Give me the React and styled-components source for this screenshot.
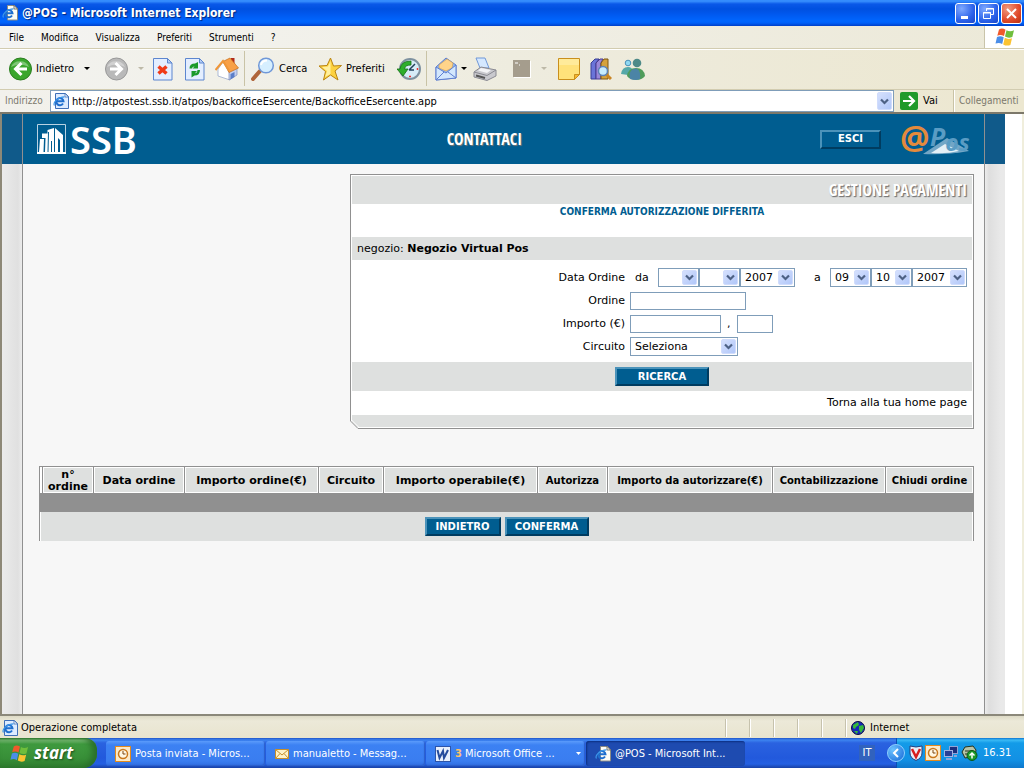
import React from "react";
import styled, { createGlobalStyle, css } from "styled-components";

const BLUE = "#005d90";
const GREY = "#dee0df";
const LINE = "#909090";
const UI_FONT = `"DejaVu Sans Condensed", "DejaVu Sans", sans-serif`;
const PAGE_FONT = `"DejaVu Sans", sans-serif`;
const DISPLAY_FONT = `"Open Sans Condensed", "Roboto Condensed", "Liberation Sans Narrow", "DejaVu Sans Condensed", sans-serif`;

const GlobalStyle = createGlobalStyle`
  * { box-sizing: border-box; }
  body { margin: 0; background: #f7f7f7; font: 11px/14px ${UI_FONT}; color: #000; }
  button, input, select { font: inherit; color: inherit; margin: 0; }
  svg { display: block; flex: none; }
`;

const Screen = styled.div`
  display: flex;
  flex-direction: column;
  min-height: 100vh;
`;

/* ---------- window chrome ---------- */
const TitleBar = styled.header`
  display: flex;
  align-items: center;
  gap: 4px;
  height: 26px;
  padding: 0 2px;
  background: linear-gradient(#2f86fb 0, #3a92ff 1px, #0a58e8 4px, #0050e0 9px, #0058ee 14px, #0066ff 21px, #0060f8 23px, #003fc8 26px);
`;
const WindowTitle = styled.h1`
  flex: 1;
  margin: 0;
  font: bold 12px/16px ${UI_FONT};
  color: #fff;
  text-shadow: 1px 1px 1px #00257a;
`;
const WindowButtons = styled.div`
  display: flex;
  gap: 2px;
`;
const WindowButton = styled.button`
  width: 21px;
  height: 21px;
  padding: 0;
  display: grid;
  place-items: center;
  border: 1px solid #fff;
  border-radius: 3px;
  background: ${(p) =>
    p.$close
      ? "radial-gradient(circle at 30% 25%, #f09a80, #e0492a 60%, #b9300f)"
      : "radial-gradient(circle at 30% 25%, #7fa9ff, #2c62ea 60%, #1a46c8)"};
`;

const MenuBar = styled.nav`
  display: flex;
  height: 23px;
  background: linear-gradient(90deg, #f4f4f2, #ece9d8);
  border-bottom: 1px solid #d2ccb0;
`;
const MenuItems = styled.div`
  flex: 1;
  display: flex;
  align-items: center;
  gap: 1px;
  padding-left: 1px;
`;
const MenuItem = styled.button`
  border: 0;
  background: none;
  padding: 1px 8px 0;
  font-size: 10px;
`;
const Throbber = styled.div`
  width: 40px;
  display: grid;
  place-items: center;
  background: #fff;
  border-left: 1px solid #c9c4aa;
`;

const Toolbar = styled.div`
  display: flex;
  align-items: center;
  height: 41px;
  padding: 0 0 2px 8px;
  background: linear-gradient(90deg, #f3f3f0, #eeecdf 50%, #ece7d0);
  border-top: 1px solid #fff;
  border-bottom: 1px solid #d2ccb0;
`;
const Tool = styled.button`
  display: flex;
  align-items: center;
  justify-content: ${(p) => (p.$wide ? "flex-start" : "center")};
  gap: 4px;
  width: ${(p) => p.$wide || 32}px;
  height: 34px;
  padding: 0 0 0 ${(p) => p.$pad || 0}px;
  border: 0;
  background: none;
  white-space: nowrap;
`;
const ToolArrow = styled.span`
  margin-left: ${(p) => (p.$tight ? 0 : 6)}px;
  border: 3px solid transparent;
  border-top-color: ${(p) => (p.$off ? "#bdb9a8" : "#000")};
  border-bottom: 0;
`;
const Divider = styled.span`
  width: 1px;
  height: 35px;
  margin: 0 ${(p) => p.$after}px 0 1px;
  background: #c9c3a6;
`;

const AddressBar = styled.form`
  display: flex;
  align-items: stretch;
  height: 24px;
  background: linear-gradient(90deg, #f2f1ec, #ece7d0);
  border-bottom: 2px solid #7c786a;
`;
const AddressLabel = styled.label`
  width: 50px;
  padding-left: 5px;
  line-height: 22px;
  font-size: 10px;
  color: #7b786c;
`;
const AddressBox = styled.div`
  flex: 1;
  display: flex;
  align-items: center;
  gap: 3px;
  padding: 1px 1px 1px 2px;
  background: #fff;
  border: 1px solid #7f9db9;
`;
const AddressInput = styled.input`
  flex: 1;
  min-width: 0;
  border: 0;
  padding: 2px 0 0;
  background: none;
  outline: none;
`;
const arrowFace = css`
  display: grid;
  place-items: center;
  padding: 0;
  border: 1px solid #d0dcfc;
  border-radius: 2px;
  background: linear-gradient(135deg, #d5e0fd, #b1c7f9);
`;
const DropButton = styled.button`
  ${arrowFace}
  width: 15px;
  height: 18px;
`;
const GoButton = styled.button`
  display: flex;
  align-items: center;
  gap: 5px;
  width: 60px;
  padding: 0 0 0 6px;
  border: 0;
  border-right: 1px solid #c9c3a6;
  background: none;
`;
const LinksLabel = styled.span`
  width: 70px;
  padding-left: 4px;
  border-left: 1px solid #fff;
  font-size: 10px;
  line-height: 22px;
  color: #7b786c;
`;

/* ---------- web page ---------- */
const Viewport = styled.main`
  flex: 1;
  display: flex;
  padding-right: 17px;
  background: #fff;
  border-left: 2px solid #8d8877;
  border-right: 2px solid #f0eedc;
  font-family: ${PAGE_FONT};
`;
const Gutter = styled.div`
  width: 21px;
  background: linear-gradient(90deg, #ebebeb, #e0e0e0 80%, #ececec);
  ${(p) =>
    p.$right &&
    css`
      background: linear-gradient(90deg, #ececec, #dedede 20%, #e9e9e9 80%);
    `}
  border-${(p) => (p.$right ? "left" : "right")}: 1px solid ${LINE};
  &::before {
    content: "";
    display: block;
    height: 50px;
    background: #105a8a;
  }
`;
const Content = styled.div`
  flex: 1;
  min-width: 0;
  background: #f7f7f7;
`;
const Banner = styled.div`
  display: flex;
  align-items: center;
  height: 50px;
  padding: 0 13px 0 14px;
  background: ${BLUE};
`;
const BrandLink = styled.a`
  display: flex;
  align-items: center;
  gap: 4px;
  color: #fff;
  text-decoration: none;
  font: 600 38px/50px "Noto Sans", sans-serif;
`;
const BannerTitle = styled.a`
  flex: 1;
  text-align: center;
  padding-left: 12px;
  color: #fff;
  text-decoration: none;
  font: bold 16px/24px ${DISPLAY_FONT};
  text-shadow: 1px 1px 1px #777;
`;
const PosLogo = styled.svg`
  margin-left: 20px;
`;

const Button = styled.button`
  height: 19px;
  width: ${(p) => p.$w}px;
  padding: 0;
  background: ${BLUE};
  border: 2px solid;
  border-color: #4b93ba #003c60 #003c60 #4b93ba;
  color: #fff;
  font: bold 10px/14px ${PAGE_FONT};
`;

const Body = styled.div`
  padding: 10px 10px 20px 16px;
`;
const Card = styled.section`
  position: relative;
  width: 624px;
  max-width: 100%;
  margin-left: auto;
  padding: 1px;
  background: #fff;
  border: 1px solid ${LINE};
`;
const CutCorner = styled.svg`
  position: absolute;
  left: -1px;
  bottom: -1px;
`;
const CardBand = styled.div`
  display: flex;
  align-items: center;
  justify-content: ${(p) => p.$align || "flex-start"};
  height: ${(p) => p.$h}px;
  padding: 0 5px;
  background: ${(p) => (p.$plain ? "#fff" : GREY)};
`;
const CardTitle = styled.h2`
  margin: 0;
  color: #fff;
  font: 300 16px/24px ${DISPLAY_FONT};
  text-shadow: 1px 1px 1px #777, 1px 1px 1px #999;
`;
const CardSubtitle = styled.h3`
  height: 33px;
  margin: 0;
  text-align: center;
  color: ${BLUE};
  font: bold 10px/16px ${UI_FONT};
`;
const SearchForm = styled.form`
  display: grid;
  grid-template-columns: 273px 1fr;
  grid-auto-rows: 23px;
  column-gap: 5px;
  align-items: center;
  padding: 6px 0 4px;
`;
const FieldLabel = styled.label`
  text-align: right;
`;
const Fields = styled.div`
  display: flex;
  align-items: center;
`;
const Word = styled.span`
  width: ${(p) => p.$w}px;
  padding-left: ${(p) => p.$pad}px;
`;
const TextField = styled.input`
  width: ${(p) => p.$w}px;
  height: 18px;
  padding: 0 3px;
  background: #fff;
  border: 1px solid #7f9db9;
`;
const SelectWrap = styled.span`
  position: relative;
  width: ${(p) => p.$w}px;
`;
const SelectBox = styled.select`
  display: block;
  width: 100%;
  height: 19px;
  padding: 0 0 0 4px;
  appearance: none;
  background: #fff;
  border: 1px solid #7f9db9;
  border-radius: 0;
`;
const SelectArrow = styled.span`
  ${arrowFace}
  position: absolute;
  top: 2px;
  right: 2px;
  width: 15px;
  height: 15px;
  pointer-events: none;
`;
const HomeLink = styled.a`
  color: #000;
  text-decoration: none;
`;

const Orders = styled.section`
  margin-top: 37px;
`;
const OrdersHead = styled.div`
  padding-left: 2px;
  background: #fff;
  border: 1px solid ${LINE};
  border-bottom: 0;
`;
const OrdersTable = styled.table`
  width: 100%;
  table-layout: fixed;
  border-collapse: separate;
  border-spacing: 0;
`;
const Th = styled.th`
  width: ${(p) => p.$w}px;
  height: 26px;
  padding: 2px 0 0;
  background: ${GREY};
  border-left: 1px solid ${LINE};
  box-shadow: inset 0 0 0 1px #fff;
  font: bold ${(p) => (p.$small ? 10 : 11)}px/12px ${PAGE_FONT};
  white-space: ${(p) => (p.$wrap ? "normal" : "nowrap")};
`;
const OrdersEmpty = styled.div`
  height: 19px;
  background: ${LINE};
`;
const OrdersActions = styled.div`
  display: flex;
  justify-content: center;
  align-items: center;
  gap: 4px;
  height: 29px;
  background: ${GREY};
  border: 1px solid ${LINE};
  border-width: 0 1px;
  box-shadow: inset 1px 0 0 #fff, inset -1px 0 0 #fff;
`;

/* ---------- status bar and taskbar ---------- */
const StatusBar = styled.footer`
  display: flex;
  align-items: center;
  height: 24px;
  padding-top: 2px;
  border-top: 2px solid #8b887a;
  background: linear-gradient(#dddac6, #ece9d8 5px, #e8e4cf);
`;
const StatusText = styled.span`
  flex: 1;
  display: flex;
  align-items: center;
  gap: 3px;
  padding-left: 2px;
`;
const StatusCell = styled.span`
  display: flex;
  align-items: center;
  gap: 5px;
  width: ${(p) => p.$w || 24}px;
  height: 18px;
  padding-left: 5px;
  border-left: 1px solid #c6c2ad;
  box-shadow: inset 1px 0 0 #fff;
`;
const Taskbar = styled.footer`
  display: flex;
  height: 30px;
  background: linear-gradient(#1f55c8 0, #3d84f0 2px, #2a62e0 5px, #2259dc 20px, #2460e2 26px, #1941a5 30px);
  color: #fff;
`;
const StartButton = styled.button`
  display: flex;
  align-items: center;
  gap: 5px;
  width: 97px;
  padding: 0 0 0 10px;
  border: 0;
  border-radius: 0 12px 14px 0;
  background: linear-gradient(#2f7d2f 0, #7fc07a 2px, #3f9a3f 6px, #388f38 20px, #2e7d2e 30px);
  box-shadow: inset -5px 0 6px #2a6f2a;
  color: #fff;
  font: italic bold 17px/22px "Open Sans", sans-serif;
  text-shadow: 1px 1px 2px #1d4d1d;
`;
const Tasks = styled.div`
  flex: 1;
  display: flex;
  gap: 1px;
  padding: 3px 0 2px 9px;
`;
const Task = styled.button`
  display: flex;
  align-items: center;
  gap: 4px;
  width: 159px;
  padding: 0 4px 0 9px;
  border: 0;
  border-radius: 3px;
  background: ${(p) => (p.$active ? "#1e4bb0" : "linear-gradient(#5b9bfb, #3c81f3 4px, #3a7df0 20px, #2f6de0)")};
  box-shadow: ${(p) => (p.$active ? "inset 1px 1px 2px #0c2f80" : "inset -1px -1px 1px #2c5fca")};
  text-align: left;
`;
const TaskText = styled.span`
  flex: 1;
  white-space: nowrap;
`;
const Count = styled.b`
  color: #fec26a;
`;
const Language = styled.span`
  align-self: center;
  width: 16px;
  height: 16px;
  margin-right: 21px;
  background: #3162bd;
  text-align: center;
  line-height: 16px;
`;
const Tray = styled.div`
  position: relative;
  display: flex;
  align-items: center;
  gap: 2px;
  width: 128px;
  padding-left: 12px;
  border-left: 1px solid #0c4fb5;
  background: linear-gradient(#0c73d0 0, #3abaf5 2px, #139be8 5px, #1290e4 22px, #0f78cc 30px);
`;
const TrayToggle = styled.button`
  position: absolute;
  left: -10px;
  top: 6px;
  width: 18px;
  height: 18px;
  padding: 0;
  display: grid;
  place-items: center;
  border: 1px solid #8fd0ff;
  border-radius: 50%;
  background: radial-gradient(circle at 30% 30%, #6cc3ff, #1566d6);
`;
const Clock = styled.time`
  margin-left: 3px;
`;

/* ---------- drawings ---------- */
const Chevron = () => (
  <svg width="9" height="7" viewBox="0 0 9 7">
    <path d="M1 1.5 4.5 5 8 1.5" fill="none" stroke="#4d6185" strokeWidth="2.2" />
  </svg>
);
const PageIcon = ({ framed }) => (
  <svg width="16" height="16" viewBox="0 0 16 16">
    <path
      d={framed ? "M2.500.5h10l3 3v12h-13z" : "M5.500.5h7l3 3v11.500h-10z"}
      fill={framed ? "#dcebff" : "#fdfdf6"}
      stroke={framed ? "#3f6fb8" : "#8c8c86"}
    />
    <path d="M12 .5V4h3.500z" fill="#fff" stroke={framed ? "#3f6fb8" : "#55554f"} strokeWidth=".8" />
    <path d="M10 10.500A3.600 3.600 0 1 1 10.500 8.300H3.500" fill="none" stroke="#1f6fce" strokeWidth="2" />
    <path d="M1.500 12.500C-.5 9.500 5 4 11.500 3.800" fill="none" stroke="#3d96e8" strokeWidth="1.200" />
  </svg>
);
const Flag = ({ size }) => (
  <svg width={size} height={size} viewBox="0 0 20 20">
    <path d="M4 2.500q3-2 6.500.2L9 9Q5.500 7 2.300 8.700z" fill="#f0592b" />
    <path d="M11.500 3.200q3.500 2 7.500 0L17.300 10q-4 1.500-7.300-.500z" fill="#6fbe3c" />
    <path d="M2 10q3.500-1.500 6.700.300L7.200 17Q4 15 .5 16.600z" fill="#4b8ee8" />
    <path d="M9.800 10.800q3.300 2 7.200.400L15.400 18q-3.900 1.400-7.200-.600z" fill="#fbc332" />
  </svg>
);
const BackIcon = ({ off }) => (
  <svg width="24" height="24" viewBox="0 0 24 24">
    <circle cx="12.500" cy="12" r="11" fill={off ? "#b9b9b9" : "#3aa62d"} stroke={off ? "#989898" : "#2b7d20"} />
    <path d="M3 10a9.500 8.500 0 0 1 18 0q-9-5-18 0" fill="#fff" opacity=".35" />
    <path
      d={off ? "M6 12h11M11.500 6l6 6-6 6" : "M19 12H8M13.500 6l-6 6 6 6"}
      fill="none"
      stroke="#fff"
      strokeWidth="3"
    />
  </svg>
);
const Sheet = ({ children }) => (
  <svg width="20" height="24" viewBox="0 0 20 24">
    <path d="M.5 1.500h14l4.500 4.500v17H.5z" fill="#e4eeff" stroke="#5d86cf" />
    <path d="M14.500 1.500V6H19z" fill="#b5cdf6" stroke="#5d86cf" />
    {children}
  </svg>
);
const StopIcon = () => (
  <Sheet>
    <path d="M5.500 9.500l8 7M13.500 9.500l-8 7" stroke="#f03a18" strokeWidth="3.500" />
  </Sheet>
);
const RefreshIcon = () => (
  <Sheet>
    <path d="M4.500 11.500q0-5 5.500-5l3-1.500v6.500H7.500l2-2q-2-.2-2.500 2zM15 13q0 5.500-5.500 5.500L6.500 20.500V14H12l-2 2.300q2 .2 2.500-3.300z" fill="#1a9a2a" />
  </Sheet>
);
const HomeIcon = () => (
  <svg width="24" height="24" viewBox="0 0 24 24">
    <path d="M16 1h3.500v8H16z" fill="#b02a1a" />
    <path d="M3 12v7l12 4v-9L8 5z" fill="#fff" stroke="#9aa9cc" strokeWidth=".8" />
    <path d="M14 13v10l8-5v-8z" fill="#c2cff0" stroke="#8696c0" strokeWidth=".8" />
    <path d="M8 4.500 15 1l8.500 10-9.500 4.500z" fill="#f8a046" stroke="#c76b16" strokeWidth=".7" />
    <path d="M.5 13 8 4l6 9.500" fill="none" stroke="#ef9638" strokeWidth="2" />
    <path d="M15.500 17l4-2v5l-4 2.500z" fill="#5b7ec8" />
  </svg>
);
const SearchIcon = () => (
  <svg width="24" height="24" viewBox="0 0 24 24">
    <path d="M9 14 2 22" stroke="#b0653a" strokeWidth="4" strokeLinecap="round" />
    <circle cx="15" cy="8.500" r="7.300" fill="#d6efff" stroke="#7098d8" strokeWidth="1.500" />
    <path d="M10 8q1-4.500 6-4.500" fill="none" stroke="#fff" strokeWidth="2" />
  </svg>
);
const StarIcon = () => (
  <svg width="24" height="24" viewBox="0 0 24 24">
    <path d="M12.500 1l3 8 8-.5-6.500 5.500 3 9-7.500-5-7 5 2-8.500L1 9l8-.5z" fill="#fdd240" stroke="#b98412" />
    <path d="M12.500 4v13L7 20l2-6-5-4 6-.5z" fill="#fff0a0" />
  </svg>
);
const HistoryIcon = () => (
  <svg width="24" height="24" viewBox="0 0 24 24">
    <circle cx="13" cy="12" r="10" fill="#d7ecf8" stroke="#7f92a0" strokeWidth="2" />
    <path d="M12 13l6-6M12 13h5" stroke="#23415c" strokeWidth="1.500" />
    <path d="M20.500 11v2M12 19.500h2" stroke="#e33" strokeWidth="1.500" />
    <path d="M0 12h3q1-8 11-8v4q-6 0-6.500 4H11l-5 7z" fill="#2eae2b" stroke="#157015" strokeWidth=".8" />
  </svg>
);
const MailIcon = () => (
  <svg width="22" height="24" viewBox="0 0 22 24">
    <path d="M1 10 11 1l10 7v13L1 23z" fill="#8fb8f2" stroke="#5f7fd0" />
    <path d="M4 8l8-6 6 4-1 5-6 3-7-3z" fill="#ffd48a" stroke="#d09a4a" strokeWidth=".6" />
    <path d="M1 10l10 6 10-8v13L1 23z" fill="#d3e7fd" stroke="#5f7fd0" />
    <path d="M1 23l8-8M21 21l-8-6" stroke="#5f7fd0" />
  </svg>
);
const PrintIcon = () => (
  <svg width="24" height="24" viewBox="0 0 24 24">
    <path d="M3 1h9l4 10H7z" fill="#d5e8ff" stroke="#7098d8" />
    <path d="M1 15 8 10l15 3v6l-9 4.500L1 20z" fill="#c9c9ce" stroke="#8a8a92" />
    <path d="M1 15l13 3.500L23 13" fill="none" stroke="#8a8a92" />
    <path d="M5 13.500 8 11l10 2-4 3z" fill="#f4f4f6" />
    <path d="M3 18.500l9 2.500" stroke="#555" strokeWidth="2" />
  </svg>
);
const SquareIcon = () => (
  <svg width="18" height="18" viewBox="0 0 18 18">
    <path d="M1 1h17v17H1z" fill="#fff" />
    <path d="M0 0h17v17H0z" fill="#a59d8d" />
    <path d="M2 3h3M6 5h1" stroke="#fff" />
  </svg>
);
const NoteIcon = () => (
  <svg width="22" height="22" viewBox="0 0 22 22">
    <path d="M.5.5h21v16l-5 5H.5z" fill="#ffe27a" stroke="#c98f1c" />
    <path d="M1 1h20v6H1z" fill="#fff0a8" opacity=".7" />
    <path d="M16.500 21.500v-5h5z" fill="#f7b62f" stroke="#c98f1c" />
  </svg>
);
const ResearchIcon = () => (
  <svg width="22" height="22" viewBox="0 0 22 22">
    <path d="M1 5 5 1h4L6 5v16H1z" fill="#6a74d8" stroke="#383f94" />
    <path d="M6 5l4-4h3L11 5v16H6z" fill="#9a88d8" stroke="#4b3b90" />
    <path d="M11 5l3-4h4v20h-7z" fill="#d6a23c" stroke="#7d5715" />
    <path d="M16 16l5 5" stroke="#c98524" strokeWidth="3" />
    <circle cx="13" cy="13" r="4.500" fill="#c7ecff" stroke="#5c82b8" strokeWidth="1.500" />
  </svg>
);
const MessengerIcon = () => (
  <svg width="24" height="22" viewBox="0 0 24 22">
    <circle cx="7" cy="5" r="2.800" fill="#8fd8f2" stroke="#4a90b8" />
    <path d="M0 16q1-7 7-7 4 0 5 4l-5 4z" fill="#54a8a8" />
    <path d="M6 18q1-8 9-8t9 8q-3 4-9 4t-9-4" fill="#4f9c5a" />
    <path d="M9 21q-2-10 6-10.500 5 1 4 10.500-4 2-10 0" fill="#4a7cc0" opacity=".75" />
    <circle cx="16" cy="5" r="4.300" fill="#4e8a88" />
  </svg>
);
const GoIcon = () => (
  <svg width="18" height="18" viewBox="0 0 18 18">
    <rect width="18" height="18" rx="2" fill="#209a2a" />
    <path d="M3 9h11M9 4l5 5-5 5" fill="none" stroke="#fff" strokeWidth="2.200" />
  </svg>
);
const Building = () => (
  <svg width="29" height="31" viewBox="0 0 29 31">
    <path d="M.5 28V.5h28V28" fill="none" stroke="#b9d2e2" />
    <path d="M0 28h29v2H0z" fill="#fff" />
    <path d="M2 28 3 15h4l-.5 13zM8 28 8.500 14H5V9.500h5.500V6L17 4v24z" fill="#fff" />
    <path d="M18 4l8 7v17h-3V16l-2-2v14h-3z" fill="#fff" />
    <path d="M11.500 8 11 28M14.500 17v11" stroke={BLUE} />
  </svg>
);
const Globe = () => (
  <svg width="14" height="14" viewBox="0 0 14 14">
    <circle cx="7" cy="7" r="6.500" fill="#1727b8" stroke="#0a0a40" />
    <path d="M2 4l5-3 1 3-3 2-1 2-2-1zM8 5l4-1 1 3-3 5-2-3zM3 10l4 0-1 3z" fill="#35b83a" />
  </svg>
);
const ClockMail = () => (
  <svg width="16" height="16" viewBox="0 0 16 16">
    <rect x=".5" y=".5" width="15" height="15" fill="#fbe9c8" stroke="#e38a1c" />
    <circle cx="8" cy="8" r="4.500" fill="#fff8e4" stroke="#c9781c" strokeWidth="1.500" />
    <path d="M8 5v3h2.500" fill="none" stroke="#7a4510" />
  </svg>
);
const Envelope = () => (
  <svg width="14" height="16" viewBox="0 0 14 16">
    <path d="M.5 3.500h13v9H.5z" fill="#fff3c8" stroke="#c78f2b" />
    <path d="M.5 3.500 7 9l6.500-5.500M.5 12.500 5 7.500M13.500 12.500 9 7.500" fill="none" stroke="#c78f2b" />
  </svg>
);
const WordIcon = () => (
  <svg width="16" height="16" viewBox="0 0 16 16">
    <rect x=".5" y=".5" width="15" height="15" fill="#e8effc" stroke="#2d54a8" />
    <path d="M2.500 4l2 8L8 5l1 7 4-8" fill="none" stroke="#244a9c" strokeWidth="2" />
  </svg>
);
const Shield = () => (
  <svg width="14" height="16" viewBox="0 0 14 16">
    <path d="M1 1q6 2 12 0v7q0 5-6 7.500Q1 13 1 8z" fill="#e8eef8" stroke="#24407c" />
    <path d="M3 4l4 8 4-8" fill="none" stroke="#d81e1e" strokeWidth="2.500" />
  </svg>
);
const Network = () => (
  <svg width="16" height="16" viewBox="0 0 16 16">
    <rect x="6.500" y="1.500" width="8" height="7" fill="#1c2f7c" stroke="#8fa3d6" />
    <rect x="1.500" y="5.500" width="8" height="6" fill="#2a3f96" stroke="#a3b3e0" />
    <path d="M3 14h6M11 11h3" stroke="#8fa3d6" strokeWidth="2" />
  </svg>
);
const Eject = () => (
  <svg width="17" height="16" viewBox="0 0 17 16">
    <path d="M1 7l3-5 8-1 3 4-1 6-10 2z" fill="#b8c4a8" stroke="#24331c" />
    <path d="M4 6h8M4 9h6" stroke="#24331c" />
    <circle cx="11" cy="10.500" r="5" fill="#1d9a2a" stroke="#0c5a15" />
    <path d="M11 13.500v-4M8.500 10.500 11 8l2.500 2.500" fill="none" stroke="#fff" strokeWidth="1.500" />
  </svg>
);

function Select({ w, label, id, value = "" }) {
  return (
    <SelectWrap $w={w}>
      <SelectBox id={id} aria-label={label} defaultValue={value}>
        <option>{value}</option>
      </SelectBox>
      <SelectArrow>
        <Chevron />
      </SelectArrow>
    </SelectWrap>
  );
}

const COLUMNS = [
  { text: "n° ordine", w: 51, wrap: true },
  { text: "Data ordine", w: 91 },
  { text: "Importo ordine(€)", w: 134 },
  { text: "Circuito", w: 65 },
  { text: "Importo operabile(€)", w: 154 },
  { text: "Autorizza", w: 70, small: true },
  { text: "Importo da autorizzare(€)", w: 165, small: true },
  { text: "Contabilizzazione", w: 113, small: true },
  { text: "Chiudi ordine", w: 88, small: true },
];

export default function App() {
  return (
    <Screen>
      <GlobalStyle />
      <TitleBar>
        <PageIcon />
        <WindowTitle>@POS - Microsoft Internet Explorer</WindowTitle>
        <WindowButtons>
          <WindowButton aria-label="Riduci">
            <svg width="15" height="15"><path d="M3 11.500h7" stroke="#fff" strokeWidth="3" /></svg>
          </WindowButton>
          <WindowButton aria-label="Ripristina">
            <svg width="15" height="15">
              <path d="M5.500 5V2.500h7v6H10M5 3h8M2.500 6.500h7v6h-7zM2 7h8" fill="none" stroke="#fff" />
            </svg>
          </WindowButton>
          <WindowButton $close aria-label="Chiudi">
            <svg width="15" height="15"><path d="M3 3l9 9M12 3l-9 9" stroke="#fff" strokeWidth="2" /></svg>
          </WindowButton>
        </WindowButtons>
      </TitleBar>
      <MenuBar>
        <MenuItems>
          {["File", "Modifica", "Visualizza", "Preferiti", "Strumenti", "?"].map((m) => (
            <MenuItem key={m}>{m}</MenuItem>
          ))}
        </MenuItems>
        <Throbber><Flag size={20} /></Throbber>
      </MenuBar>
      <Toolbar>
        <Tool $wide={96}><BackIcon />Indietro<ToolArrow /></Tool>
        <Tool $wide={43} aria-label="Avanti"><BackIcon off /><ToolArrow $off /></Tool>
        <Tool aria-label="Termina"><StopIcon /></Tool>
        <Tool aria-label="Aggiorna"><RefreshIcon /></Tool>
        <Tool aria-label="Pagina iniziale"><HomeIcon /></Tool>
        <Divider $after={6} />
        <Tool $wide={67}><SearchIcon />Cerca</Tool>
        <Tool $wide={75}><StarIcon />Preferiti</Tool>
        <Tool aria-label="Cronologia"><HistoryIcon /></Tool>
        <Divider $after={8} />
        <Tool $wide={34} aria-label="Posta"><MailIcon /><ToolArrow $tight /></Tool>
        <Tool aria-label="Stampa"><PrintIcon /></Tool>
        <Tool $wide={52} $pad={12} aria-label="Modifica"><SquareIcon /><ToolArrow $off /></Tool>
        <Tool aria-label="Note"><NoteIcon /></Tool>
        <Tool aria-label="Ricerche"><ResearchIcon /></Tool>
        <Tool aria-label="Messenger"><MessengerIcon /></Tool>
      </Toolbar>
      <AddressBar onSubmit={(e) => e.preventDefault()}>
        <AddressLabel htmlFor="address">Indirizzo</AddressLabel>
        <AddressBox>
          <PageIcon framed />
          <AddressInput id="address" defaultValue="http://atpostest.ssb.it/atpos/backofficeEsercente/BackofficeEsercente.app" />
          <DropButton type="button" aria-label="Apri elenco"><Chevron /></DropButton>
        </AddressBox>
        <GoButton><GoIcon />Vai</GoButton>
        <LinksLabel>Collegamenti</LinksLabel>
      </AddressBar>

      <Viewport>
        <Gutter />
        <Content>
          <Banner>
            <BrandLink href="#"><Building />SSB</BrandLink>
            <BannerTitle href="#">CONTATTACI</BannerTitle>
            <Button $w={61}>ESCI</Button>
            <PosLogo width="70" height="50" viewBox="0 0 70 50">
              <path d="M22 40 Q34 32 46 24 L68 37 Q46 41 22 40" fill="#8fb9d3" opacity=".8" />
              <path d="M30 39l14-9 14 7q-12 3-28 2" fill="#e4f0f7" />
              <text x="-1" y="35" fill="#e38a3c" fontFamily="Open Sans, sans-serif" fontWeight="bold" fontSize="33">@</text>
              <text x="29" y="32" fill="#5a9cc4" fontFamily="Open Sans, sans-serif" fontWeight="bold" fontStyle="italic" fontSize="25">
                P<tspan dy="5" fontSize="23">os</tspan>
              </text>
            </PosLogo>
          </Banner>
          <Body>
            <Card>
              <CardBand $h={28} $align="flex-end"><CardTitle>GESTIONE PAGAMENTI</CardTitle></CardBand>
              <CardSubtitle>CONFERMA AUTORIZZAZIONE DIFFERITA</CardSubtitle>
              <CardBand $h={23}><span>negozio: <b>Negozio Virtual Pos</b></span></CardBand>
              <SearchForm id="search" onSubmit={(e) => e.preventDefault()}>
                <FieldLabel htmlFor="from-day">Data Ordine</FieldLabel>
                <Fields>
                  <Word $w={28} $pad={5}>da</Word>
                  <Select id="from-day" w={41} />
                  <Select w={41} label="Mese da" />
                  <Select w={55} label="Anno da" value="2007" />
                  <Word $w={35} $pad={19}>a</Word>
                  <Select w={41} label="Giorno a" value="09" />
                  <Select w={41} label="Mese a" value="10" />
                  <Select w={55} label="Anno a" value="2007" />
                </Fields>
                <FieldLabel htmlFor="order">Ordine</FieldLabel>
                <Fields><TextField id="order" $w={116} /></Fields>
                <FieldLabel htmlFor="amount">Importo (€)</FieldLabel>
                <Fields>
                  <TextField id="amount" $w={91} />
                  <Word $w={16} $pad={6}>,</Word>
                  <TextField aria-label="Centesimi" $w={36} />
                </Fields>
                <FieldLabel htmlFor="circuit">Circuito</FieldLabel>
                <Fields><Select id="circuit" w={108} value="Seleziona" /></Fields>
              </SearchForm>
              <CardBand $h={29} $align="center"><Button form="search" $w={94}>RICERCA</Button></CardBand>
              <CardBand $h={24} $align="flex-end" $plain><HomeLink href="#">Torna alla tua home page</HomeLink></CardBand>
              <CardBand $h={12} />
              <CutCorner width="9" height="9" viewBox="0 0 9 9">
                <path d="M0 0v9h9z" fill="#f7f7f7" />
                <path d="M.5 0v1L8 8.500h1" fill="none" stroke={LINE} />
                <path d="M1.500 0 9 7.500" stroke="#fff" />
              </CutCorner>
            </Card>
            <Orders>
              <OrdersHead>
                <OrdersTable>
                  <thead>
                    <tr>
                      {COLUMNS.map((c) => (
                        <Th key={c.text} scope="col" $w={c.w} $small={c.small} $wrap={c.wrap}>{c.text}</Th>
                      ))}
                    </tr>
                  </thead>
                </OrdersTable>
              </OrdersHead>
              <OrdersEmpty />
              <OrdersActions>
                <Button $w={76}>INDIETRO</Button>
                <Button $w={84}>CONFERMA</Button>
              </OrdersActions>
            </Orders>
          </Body>
        </Content>
        <Gutter $right />
      </Viewport>

      <StatusBar>
        <StatusText><PageIcon framed />Operazione completata</StatusText>
        <StatusCell /><StatusCell /><StatusCell /><StatusCell /><StatusCell />
        <StatusCell $w={179}><Globe />Internet</StatusCell>
      </StatusBar>
      <Taskbar>
        <StartButton><Flag size={19} />start</StartButton>
        <Tasks>
          <Task><ClockMail /><TaskText>Posta inviata - Micros...</TaskText></Task>
          <Task><Envelope /><TaskText>manualetto - Messag...</TaskText></Task>
          <Task><WordIcon /><TaskText><Count>3</Count> Microsoft Office ...</TaskText><svg width="5" height="3"><path d="M0 0h5L2.500 3z" fill="#fff" /></svg></Task>
          <Task $active><PageIcon /><TaskText>@POS - Microsoft Int...</TaskText></Task>
        </Tasks>
        <Language>IT</Language>
        <Tray>
          <TrayToggle aria-label="Mostra icone"><svg width="8" height="10"><path d="M6 1 2 5l4 4" fill="none" stroke="#fff" strokeWidth="2" /></svg></TrayToggle>
          <Shield /><ClockMail /><Network /><Eject />
          <Clock>16.31</Clock>
        </Tray>
      </Taskbar>
    </Screen>
  );
}
